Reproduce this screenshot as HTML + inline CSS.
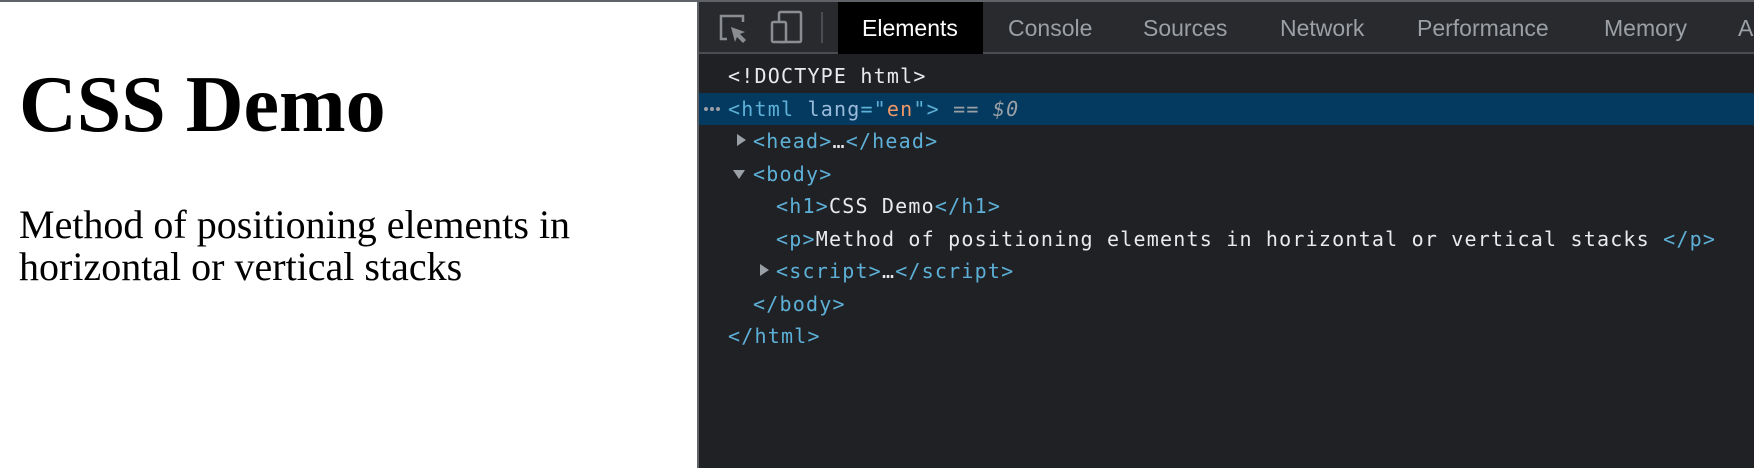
<!DOCTYPE html>
<html><head><style>
*{margin:0;padding:0;box-sizing:border-box}
body{width:1754px;height:468px;overflow:hidden;position:relative;background:#fff;font-family:"Liberation Sans",sans-serif}
.top{position:absolute;left:0;top:0;width:1754px;height:2px;background:#5f6368}
.page{position:absolute;left:0;top:2px;width:697px;height:466px;background:#fff}
.h1{position:absolute;left:19px;top:0;font:bold 80px/1 "Liberation Serif",serif;white-space:nowrap}
.p{position:absolute;left:19px;font:40px/42px "Liberation Serif",serif;white-space:nowrap}
.div{position:absolute;left:697px;top:0;width:2px;height:468px;background:#5f6368}
.dt{position:absolute;left:699px;top:2px;width:1055px;height:466px;background:#202124;overflow:hidden}
.bar{position:absolute;left:0;top:0;width:1055px;height:52px;background:#292a2d;border-bottom:2px solid #494c50}
.tab{position:absolute;top:0;height:52px;line-height:52px;font-size:23px;color:#9aa0a6;white-space:nowrap}
.sel{background:#000;color:#fff}
.row{position:absolute;left:0;width:1055px;height:32px;line-height:32px;font:20px/32px "DejaVu Sans Mono",monospace;letter-spacing:1.2px;color:#e8eaed;white-space:pre}
.t{color:#5db0d7}.a{color:#9bbbdc}.v{color:#f29766}.g{color:#9aa0a6}
.tri{position:absolute;width:0;height:0}
.dot{position:absolute;top:14px;width:4px;height:4px;border-radius:2px;background:#9aa0a6}
</style></head><body>
<div class="top"></div>
<div class="page">
<div class="h1" style="top:63px">CSS Demo</div>
<div class="p" style="top:202px">Method of positioning elements in<br>horizontal or vertical stacks</div>
</div>
<div class="div"></div>
<div class="dt">
<div class="bar">
<svg style="position:absolute;left:0;top:0" width="140" height="52" viewBox="699 2 140 52">
<g fill="none" stroke="#8a8d91" stroke-width="2.5">
<path d="M727 39 H721 V16 H743 V22"/>
<rect x="779" y="12" width="22" height="30" rx="1.5"/>
</g>
<path d="M731 27 L745 32 L740 34 L746 40 L743 43 L737 37 L735 42 Z" fill="#8a8d91"/>
<rect x="772" y="22" width="14" height="20" rx="1.5" fill="#292a2d" stroke="#8a8d91" stroke-width="2.5"/>
<rect x="821" y="12" width="2" height="31" fill="#494c50"/>
</svg>
<div class="tab sel" style="left:139px;width:145px;padding-left:24px">Elements</div>
<div class="tab" style="left:309px">Console</div>
<div class="tab" style="left:444px">Sources</div>
<div class="tab" style="left:581px">Network</div>
<div class="tab" style="left:718px">Performance</div>
<div class="tab" style="left:905px">Memory</div>
<div class="tab" style="left:1039px">Application</div>
</div>
<div class="row" style="top:58px;padding-left:29px">&lt;!DOCTYPE html&gt;</div>
<div class="row" style="top:91px;background:#043a5f;padding-left:29px"><i class="dot" style="left:5px"></i><i class="dot" style="left:11px"></i><i class="dot" style="left:17px"></i><span class="t">&lt;html</span> <span class="a">lang</span><span class="t">="</span><span class="v">en</span><span class="t">"&gt;</span> <span class="g">== <i>$0</i></span></div>
<div class="row" style="top:123px;padding-left:54px"><span class="t">&lt;head&gt;</span>…<span class="t">&lt;/head&gt;</span></div>
<div class="tri" style="left:38px;top:132px;border-left:9px solid #9aa0a6;border-top:6px solid transparent;border-bottom:6px solid transparent"></div>
<div class="row" style="top:156px;padding-left:54px"><span class="t">&lt;body&gt;</span></div>
<div class="tri" style="left:34px;top:168px;border-top:9px solid #9aa0a6;border-left:6px solid transparent;border-right:6px solid transparent"></div>
<div class="row" style="top:188px;padding-left:77px"><span class="t">&lt;h1&gt;</span>CSS Demo<span class="t">&lt;/h1&gt;</span></div>
<div class="row" style="top:221px;padding-left:77px"><span class="t">&lt;p&gt;</span>Method of positioning elements in horizontal or vertical stacks <span class="t">&lt;/p&gt;</span></div>
<div class="row" style="top:253px;padding-left:77px"><span class="t">&lt;script&gt;</span>…<span class="t">&lt;/script&gt;</span></div>
<div class="tri" style="left:61px;top:262px;border-left:9px solid #9aa0a6;border-top:6px solid transparent;border-bottom:6px solid transparent"></div>
<div class="row" style="top:286px;padding-left:54px"><span class="t">&lt;/body&gt;</span></div>
<div class="row" style="top:318px;padding-left:29px"><span class="t">&lt;/html&gt;</span></div>
</div>
</body></html>
